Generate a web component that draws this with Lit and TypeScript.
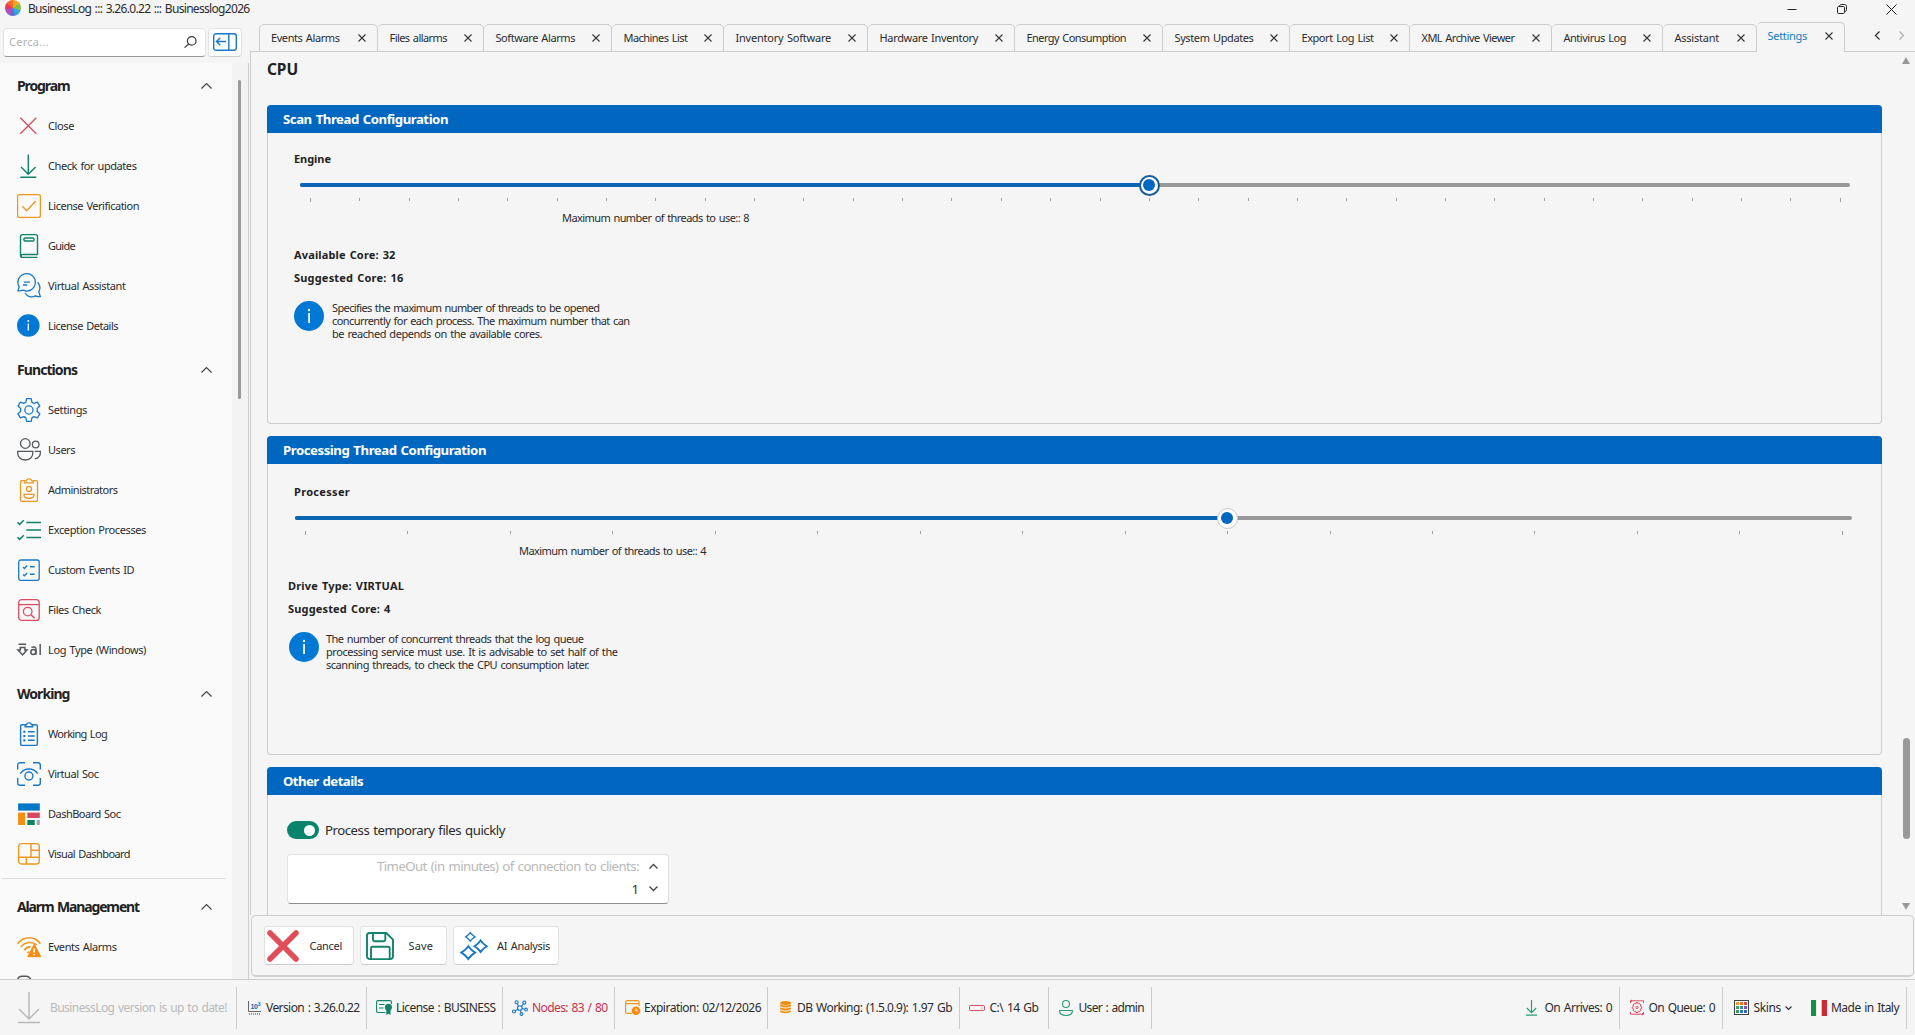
import { LitElement, html, css, svg, nothing } from "lit";
import { customElement, property } from "lit/decorators.js";
import { classMap } from "lit/directives/class-map.js";
import { styleMap } from "lit/directives/style-map.js";

const BLUE = "#1a78c6";
const GREEN = "#128268";
const AMBER = "#ee971f";
const RED = "#d94e62";
const GREY = "#55595c";

const check = (x: number, y: number, s = 1) =>
  svg`<path d="M${x} ${y}l${2 * s} ${2 * s}l${4 * s} ${-4 * s}"/>`;

/* Every glyph lives on a 24 x 24 grid unless its entry in BOX says otherwise. */
const GLYPHS: Record<string, unknown> = {
  close: svg`<g stroke="${RED}" stroke-width="1.3"><path d="M3.3 3.800l16 16M19.3 3.800l-16 16"/></g>`,
  update: svg`<g stroke="${GREEN}" stroke-width="1.4"><path d="M11.3.5v19.7M4 13l7.3 7.3L18.600 13M3.300 23.300h16"/></g>`,
  verify: svg`<g stroke="${AMBER}" stroke-width="1.3"><rect x=".6" y=".6" width="22.800" height="22.800" rx="2"/><path d="M5.300 12.300l4.400 4.400 9-9.700"/></g>`,
  guide: svg`<g stroke="${GREEN}" stroke-width="1.4"><path d="M20.400 23.400H5.500a2 2 0 0 1-2-2V2.600a2 2 0 0 1 2-2h13a2 2 0 0 1 2 2v17.900H5.400a1.450 1.450 0 0 0 0 2.900"/><rect x="7" y="4" width="10" height="3" rx="1"/></g>`,
  chat: svg`<g stroke="${BLUE}" stroke-width="1.300"><path d="M1 16.800l1.200-4A8.700 8.700 0 1 1 6 16.200c-1.500.600-3.200.800-5 .600z"/><path d="M7 8.200h6M6 11h4.300" stroke-width="1.300"/><path d="M20.600 8.300c2.600 3 2.900 6.500 1.200 9.600l1.500 4.600c-1.900.300-3.400 0-4.800-.700-4 2-8.300.900-10.500-2.800"/></g>`,
  info: svg`<circle cx="11.300" cy="11.500" r="11.300" fill="#0078d4" stroke="none"/><path d="M11.300 9.400v7.200" stroke="#fff" stroke-width="1.300"/><circle cx="11.300" cy="6.900" r=".95" fill="#fff"/>`,
  gear: svg`<g stroke="${BLUE}" stroke-width="1.300"><path d="M9.600.700h4.600l.8 3.600q1 .4 2 1l3.400-1.200 2.400 4-2.700 2.500q.3 1.300 0 2.700l2.700 2.500-2.400 4-3.400-1.200q-1 .700-2 1.100l-.8 3.600H9.600l-.8-3.600q-1-.4-2-1.100l-3.400 1.200-2.400-4 2.700-2.500q-.3-1.400 0-2.700L1 8.100l2.400-4 3.400 1.200q1-.6 2-1z" stroke-linejoin="round"/><circle cx="11.900" cy="12" r="4.100"/></g>`,
  users: svg`<g stroke="${GREY}" stroke-width="1.300"><circle cx="8.300" cy="5.500" r="4.800"/><circle cx="18.700" cy="6.500" r="3.300"/><path d="M.600 13.300h15.300c.4 5.600-2.800 8.700-7.600 8.700S.2 18.900.6 13.300zM17.700 13.300h5.700c.4 4.600-2 7.300-5.700 7.500"/></g>`,
  admin: svg`<g stroke="${AMBER}" stroke-width="1.300"><path d="M7.700 2.600H4.800A1.300 1.300 0 0 0 3.500 3.900v18.200a1.300 1.300 0 0 0 1.300 1.300h14.400a1.300 1.300 0 0 0 1.300-1.300V3.900a1.300 1.300 0 0 0-1.300-1.300h-2.900"/><path d="M7.700 4.900V2.800h1.500C9.800.300 14.200.300 14.800 2.800h1.500v2.100z"/><circle cx="12" cy="10.900" r="2.500"/><path d="M7 16.400h10c.2 2.700-1.700 3.900-5 3.900s-5.200-1.200-5-3.900z"/></g>`,
  checklist: svg`<g stroke="${GREEN}" stroke-width="1.500">${check(0.5, 4.300, 1.050)}${check(0.5, 19.300, 1.050)}<path d="M9.300 4.500h14.700M9.300 12h14.700M9.300 19.600h14.700"/></g>`,
  events: svg`<g stroke="${BLUE}" stroke-width="1.300"><rect x="1.700" y="2" width="20.500" height="20.300" rx="2"/><g stroke-width="1.400">${check(6, 9, 0.7)}${check(6, 16.400, 0.7)}<path d="M13 8.700h4.700M13 16.200h4.700"/></g></g>`,
  files: svg`<g stroke="${RED}" stroke-width="1.300"><rect x="1.700" y="1.700" width="20.500" height="20.700" rx="3"/><path d="M1.700 6.600h20.500"/><circle cx="10.700" cy="13.600" r="4.300"/><path d="M14 16.800l3.600 3.500" stroke-width="1.600"/></g>`,
  logtype: svg`<g stroke="${GREY}" stroke-width="1.500"><path d="M1.500 6.300h7.600M3.300 9.400h4.600v2.700h2L5.600 16.900 1 12.100h2.300z"/><circle cx="16.300" cy="13.900" r="2.500" /><path d="M14.400 9.400c2-1 4.600-.5 4.600 1.600v5.800M23.200 5.900v11"/></g>`,
  worklog: svg`<g stroke="${BLUE}" stroke-width="1.400"><rect x="3.600" y="2.700" width="16.800" height="20.700" rx="1.500"/><path d="M8.200 2.700h1.300C10 .2 14 .2 14.500 2.700h1.300v2.100H8.200z" fill="#fafafa"/><path d="M11 9.700h6.700M11 14h6.700M11 18.300h6.700"/></g><g fill="${BLUE}"><rect x="6.300" y="8.700" width="2.100" height="2.100"/><rect x="6.300" y="13" width="2.100" height="2.100"/><rect x="6.300" y="17.300" width="2.100" height="2.100"/></g>`,
  soc: svg`<g stroke="${BLUE}" stroke-width="1.400"><path d="M.7 7.500V3A2.300 2.300 0 0 1 3 .7h5M16 .7h5A2.300 2.300 0 0 1 23.300 3v4.500M23.300 16v5a2.300 2.300 0 0 1-2.300 2.300h-5M8 23.300H3A2.300 2.300 0 0 1 .7 21v-5"/><circle cx="11.900" cy="14" r="4"/><path d="M3.300 11.600C5.300 8.700 8.500 7 12 7s6.700 1.700 8.700 4.600"/></g>`,
  blocks: svg`<g stroke="none"><rect x="1.100" y="1.400" width="21.700" height="7.200" fill="#0078c8"/><rect x="1.100" y="10.600" width="7" height="12.400" fill="#f98d10"/><rect x="10.300" y="10.600" width="12.500" height="5.400" fill="#d94a60"/><rect x="10.300" y="18" width="7.400" height="5" fill="#0b8466"/><rect x="19.700" y="18" width="3.100" height="5" fill="#a5a5a5"/></g>`,
  tiles: svg`<g stroke="${AMBER}" stroke-width="1.400"><rect x="1.600" y="1.600" width="20.700" height="20.400" rx="3"/><path d="M1.600 15.300h20.700M14 1.600v13.700M14 8.300h8.300M9.300 15.300V22"/></g>`,
  alarm: svg`<g stroke="${AMBER}" stroke-width="1.600"><path d="M.7 8.700C6.500.700 18 .700 23.300 8.700M3.900 12C8 6.300 15.800 6.300 19.700 10M7.300 15.200c1.500-2.300 3.600-3.500 6.300-3.300M10.300 18.200c.5-.8 1.100-1.300 2-1.500"/></g><path d="M17.200 9.300L10.800 21.700h13z" fill="#f98d10" stroke="#f98d10"/><path d="M17.200 13.500v4M17.200 19v1.200" stroke="#fff" stroke-width="1.500"/>`,
  partial: svg`<path d="M.7 5.500C.7 2.500 2 1.200 5 1.200h4c2.600 0 4.200 1.300 4.700 3.500M3.500 4.800h7" stroke="${GREY}" stroke-width="1.400"/>`,
  collapse: svg`<g stroke="${BLUE}" stroke-width="1.400"><rect x=".7" y=".7" width="22.600" height="16.600" rx="2.300"/><path d="M15.800.7v16.600M13 8.500H3.500M7.300 4.700L3.400 8.500l3.900 3.800"/></g>`,
  search: svg`<g stroke="#3b3b3b" stroke-width="1.200"><circle cx="7.700" cy="4.900" r="4.300"/><path d="M4.600 8L.5 11.600"/></g>`,
  up: svg`<path d="M.5 5.500l5-5 5 5" stroke="#444" stroke-width="1.200"/>`,
  down: svg`<path d="M.5.500l4 4 4-4" stroke="#444" stroke-width="1.300"/>`,
  upSmall: svg`<path d="M.5 4.500l4-4 4 4" stroke="#444" stroke-width="1.300"/>`,
  caret: svg`<path d="M.5.500l3 3 3-3" stroke="#333" stroke-width="1.200"/>`,
  left: svg`<path d="M4.500.5l-4 4 4 4" stroke="#333" stroke-width="1.300"/>`,
  right: svg`<path d="M.5.500l4 4-4 4" stroke="#b0b0b0" stroke-width="1.200"/>`,
  tabClose: svg`<path d="M.5.500l7 7M7.500.500l-7 7" stroke="#333" stroke-width="1.100"/>`,
  minimize: svg`<path d="M.500 5.500h9" stroke="#222"/>`,
  restore: svg`<g stroke="#222"><rect x=".500" y="2.500" width="7" height="7" rx="1.200"/><path d="M2.500 2.300c0-1.200.700-1.800 1.800-1.800h3c1.500 0 2.200.700 2.200 2.200v3c0 1.100-.600 1.800-1.800 1.800"/></g>`,
  exit: svg`<path d="M.500.500l10 10M10.500.500l-10 10" stroke="#222"/>`,
  cancel: svg`<g stroke="#e04e5a" stroke-width="5.600" stroke-linecap="round"><path d="M3 3l26 26M29 3L3 29"/></g>`,
  save: svg`<g stroke="${GREEN}" stroke-width="1.900"><path d="M3.800 1h16.500L27 7.700v16.600a2.800 2.800 0 0 1-2.800 2.800H3.800A2.800 2.800 0 0 1 1 24.300V3.800A2.800 2.800 0 0 1 3.800 1z"/><path d="M7 1v6.700a1.500 1.500 0 0 0 1.500 1.500h9.300a1.500 1.500 0 0 0 1.500-1.500V1M5 27V16.300a1.500 1.500 0 0 1 1.500-1.500h15.700a1.500 1.500 0 0 1 1.500 1.500V27"/></g>`,
  spark: svg`<g stroke="${BLUE}" stroke-width="1.900"><path d="M8.300 14.200q2.700 3.900 6.700 6.400-4 2.500-6.700 6.400-2.700-3.900-6.900-6.400 4.200-2.500 6.900-6.400zM20.600 8.500q2.400 3.500 6.100 5.700-3.700 2.200-6.100 5.700-2.400-3.500-6.100-5.700 3.700-2.200 6.100-5.700z"/><path stroke-width="1.300" d="M10.300.7q1.800 2.600 4.600 4.200-2.800 1.600-4.600 4.200-1.800-2.600-4.600-4.200Q8.500 3.300 10.300.7z"/></g>`,
  download: svg`<g stroke="#b9b9b9" stroke-width="1.500"><path d="M11 0v26.500M1 17l10 10 10-10M0 30.500h22"/></g>`,
  version: svg`<path d="M.5 0v10.500h12.500" stroke="#666"/><path d="M1 13h12" stroke="#333" stroke-dasharray="1 1"/><text x="2.500" y="7.500" font-size="7" font-weight="700" font-family="Liberation Sans" letter-spacing="-.3" fill="#0a70b8" stroke="none">10</text><text x="9.800" y="4.500" font-size="5" font-weight="700" font-family="Liberation Sans" fill="#0a70b8" stroke="none">3</text>`,
  license: svg`<g stroke="${GREEN}" stroke-width="1.100"><path d="M9.500 12.500H2A1.300 1.300 0 0 1 .6 11.200V2A1.300 1.300 0 0 1 2 .6h12A1.300 1.300 0 0 1 15.400 2v2M3 4.500h5.500M3 8h4.500"/></g><circle cx="12.400" cy="7.300" r="3.500" fill="${GREEN}"/><path d="M10.300 10v5l2.100-1.300 2.100 1.300v-5z" fill="${GREEN}"/>`,
  nodes: svg`<g stroke="${BLUE}" stroke-width="1.100"><circle cx="7.800" cy="8" r="2.300"/><circle cx="4.600" cy="2.300" r="1.500"/><circle cx="12.300" cy="2.600" r="1.500"/><circle cx="14" cy="9.500" r="1.400"/><circle cx="9.500" cy="14" r="1.400"/><circle cx="2" cy="11.500" r="1.500"/><path d="M6.500 6L5.300 3.700M9.500 6.300l1.900-2.500M10 8.500l2.600.7M8.300 10.300l.8 2.400M5.800 9.300l-2.500 1.400"/></g>`,
  expiry: svg`<g stroke="${AMBER}" stroke-width="1.200"><path d="M7 13.400H2.300A1.700 1.700 0 0 1 .6 11.700V2.300A1.700 1.700 0 0 1 2.300.6h10a1.700 1.700 0 0 1 1.700 1.700V6M.6 3.700H14"/></g><circle cx="11" cy="10.700" r="4.300" fill="#f18d0c"/><path d="M11 8.300v2.600h1.800" stroke="#fff" stroke-width=".9"/>`,
  db: svg`<g fill="#f18d0c"><ellipse cx="5.500" cy="2" rx="5.300" ry="1.900"/><path d="M.2 3.200q5.300 2.600 10.600 0v2.100q-5.300 2.500-10.600 0zM.2 6.200q5.300 2.600 10.600 0v2.100q-5.300 2.500-10.600 0zM.2 9.200q5.300 2.600 10.600 0v1.700q-5.300 2.500-10.600 0z"/></g>`,
  drive: svg`<rect x=".5" y=".5" width="15" height="5" rx="1.300" stroke="${RED}"/><circle cx="12.700" cy="3" r=".6" fill="${RED}"/>`,
  user: svg`<g stroke="#2a9d78" stroke-width="1.100"><circle cx="7" cy="4" r="3.500"/><path d="M.6 10.500h12.800c.3 3.300-2.300 5-6.400 5S.3 13.800.6 10.500z"/></g>`,
  arrives: svg`<g stroke="#2a9d78" stroke-width="1.200"><path d="M5.500 0v12.500M.8 8l4.700 4.700L10.200 8M0 15.200h11"/></g>`,
  queue: svg`<g stroke="${RED}" stroke-width="1"><path d="M.5 3V.8h13V3M.5 12v2.200h13V12M2 0L.6.8 2 1.800M12 13.200l1.500 1-1.500.9"/><path d="M6 2.700h2l.4 1.300 1.300-.5 1.300 1.500-.7 1.200 1.500.8v1.200l-1.500.8.7 1.200-1.300 1.500-1.300-.5-.4 1.300H6l-.4-1.300-1.300.5L3 10.200 3.700 9l-1.500-.8V7l1.500-.8L3 5l1.300-1.500 1.300.5z"/><circle cx="7" cy="7.500" r="1.100"/></g>`,
  skins: svg`<rect x=".5" y=".5" width="14" height="14" stroke="#3f4145" fill="#fff"/>${[
    ["#e8962e", "#e27432", "#d24b4b"],
    ["#4ba05b", "#3c87c6", "#8253a5"],
    ["#3f9a6a", "#2b78c2", "#2f6cb5"],
  ].map((row, r) => row.map((c, i) => svg`<rect x="${2 + i * 4}" y="${2 + r * 4}" width="3" height="3" fill="${c}"/>`))}`,
  italy: svg`<rect width="5.300" height="16" fill="#159147"/><rect x="5.300" width="5.400" height="16" fill="#fbfbfb"/><rect x="10.700" width="5.300" height="16" fill="#cb2a37"/>`,
};

const BOX: Record<string, [number, number]> = {
  collapse: [24, 18], search: [13, 12], up: [11, 6], down: [9, 5], upSmall: [9, 5], caret: [7, 4],
  left: [5, 9], right: [5, 9], tabClose: [8, 8], minimize: [10, 10], restore: [10, 10], exit: [11, 11],
  cancel: [32, 32], save: [28, 28], spark: [28, 28], download: [22, 31], version: [13, 14],
  license: [16, 16], nodes: [16, 16], expiry: [16, 16], db: [11, 13], drive: [16, 6], user: [14, 16],
  arrives: [11, 16], queue: [14, 15], skins: [15, 15], italy: [16, 16],
};

const icon = (name: string) => {
  const [w, h] = BOX[name] ?? [24, 24];
  return html`<svg class="icon" width=${w} height=${h} viewBox="0 0 ${w} ${h}" fill="none">${GLYPHS[name]}</svg>`;
};

/** A one-line label whose letters are tracked so that it spans a given width. */
@customElement("fit-text")
export class FitText extends LitElement {
  @property({ type: Number }) w = 0;

  static styles = css`
    :host { display: block; white-space: pre; flex: none; }
    .run { display: inline-block; word-spacing: 1px; }
  `;

  firstUpdated() {
    const run = this.renderRoot.querySelector<HTMLElement>(".run")!;
    const count = (this.textContent ?? "").length;
    if (this.w && count > 1) {
      const natural = run.getBoundingClientRect().width;
      run.style.letterSpacing = `${(this.w - natural) / count}px`;
    }
  }

  render() {
    return html`<span class="run"><slot></slot></span>`;
  }
}

const text = (label: string, w: number) => html`<fit-text w=${w}>${label}</fit-text>`;

type Entry = [glyph: string, label: string, width: number];

const SECTIONS: { title: string; width: number; ruled?: boolean; items: Entry[] }[] = [
  {
    title: "Program", width: 52.500,
    items: [
      ["close", "Close", 26], ["update", "Check for updates", 88.500], ["verify", "License Verification", 91],
      ["guide", "Guide", 27], ["chat", "Virtual Assistant", 77.500], ["info", "License Details", 70],
    ],
  },
  {
    title: "Functions", width: 60,
    items: [
      ["gear", "Settings", 39], ["users", "Users", 27], ["admin", "Administrators", 69.500],
      ["checklist", "Exception Processes", 98], ["events", "Custom Events ID", 86],
      ["files", "Files Check", 53], ["logtype", "Log Type (Windows)", 98],
    ],
  },
  {
    title: "Working", width: 52.500,
    items: [
      ["worklog", "Working Log", 59], ["soc", "Virtual Soc", 50.500],
      ["blocks", "DashBoard Soc", 72.500], ["tiles", "Visual Dashboard", 82],
    ],
  },
  {
    title: "Alarm Management", width: 122, ruled: true,
    items: [["alarm", "Events Alarms", 68.500], ["partial", "", 0]],
  },
];

const TABS: [label: string, textWidth: number, tabWidth: number][] = [
  ["Events Alarms", 68.500, 118.500], ["Files allarms", 57.500, 106], ["Software Alarms", 79.500, 128],
  ["Machines List", 64, 112], ["Inventory Software", 95.500, 144], ["Hardware Inventory", 98.500, 147],
  ["Energy Consumption", 99.500, 148], ["System Updates", 79, 127], ["Export Log List", 72, 120],
  ["XML Archive Viewer", 93, 142], ["Antivirus Log", 62.500, 111], ["Assistant", 44.500, 94],
  ["Settings", 39.500, 88],
];

interface StatusCell { glyph: string; label: string; text: number; cell: number; pad: number; slot: number; tone?: string; open?: boolean }

const STATUS_LEFT: StatusCell[] = [
  { glyph: "download", label: "BusinessLog version is up to date!", text: 177, cell: 237, pad: 18, slot: 32, tone: "muted" },
  { glyph: "version", label: "Version : 3.26.0.22", text: 93.500, cell: 130, pad: 11, slot: 18 },
  { glyph: "license", label: "License : BUSINESS", text: 99.500, cell: 136, pad: 9, slot: 20 },
  { glyph: "nodes", label: "Nodes: 83 / 80", text: 75.500, cell: 112, pad: 9, slot: 20, tone: "alert" },
  { glyph: "expiry", label: "Expiration: 02/12/2026", text: 117, cell: 153, pad: 10, slot: 19 },
  { glyph: "db", label: "DB Working: (1.5.0.9): 1.97 Gb", text: 155, cell: 192, pad: 12, slot: 17 },
  { glyph: "drive", label: "C:\\ 14 Gb", text: 49, cell: 89, pad: 9, slot: 20.500 },
  { glyph: "user", label: "User : admin", text: 65.500, cell: 103, pad: 10, slot: 19.500 },
];

const STATUS_RIGHT: StatusCell[] = [
  { glyph: "arrives", label: "On Arrives: 0", text: 67.500, cell: 93.500, pad: 0, slot: 18.500 },
  { glyph: "queue", label: "On Queue: 0", text: 66.500, cell: 103.500, pad: 10, slot: 19 },
  { glyph: "skins", label: "Skins", text: 27.500, cell: 79, pad: 11, slot: 19.500, open: true },
  { glyph: "italy", label: "Made in Italy", text: 68, cell: 105, pad: 9, slot: 20 },
];

@customElement("thread-slider")
export class ThreadSlider extends LitElement {
  @property({ type: Number }) ticks = 2;
  @property({ type: Number }) at = 0;
  @property({ type: Boolean }) focused = false;

  static styles = css`
    :host { display: block; }
    .track { position: relative; height: 4px; border-radius: 2px; background: #999; }
    .fill { height: 4px; border-radius: 2px; background: #0a64b4; }
    .thumb {
      position: absolute; top: 50%; width: 21px; height: 21px; margin: -10.5px 0 0 -10.5px; box-sizing: border-box;
      border: 1px solid #c8c8c8; border-radius: 50%; background: #fff;
      display: flex; align-items: center; justify-content: center;
    }
    .thumb.focused { border: 2px solid #15599f; }
    .dot { width: 12px; height: 12px; border-radius: 50%; background: #0067c0; }
    .ticks { display: flex; justify-content: space-between; margin: 11px 9px 0 10px; height: 5px; }
    .tick { width: 1px; height: 3px; background: #a0a0a0; }
    .tick:first-child, .tick:last-child { height: 4px; }
  `;

  render() {
    return html`
      <div class="track">
        <div class="fill" style=${styleMap({ width: `${this.at}%` })}></div>
        <div class=${classMap({ thumb: true, focused: this.focused })} style=${styleMap({ left: `${this.at}%` })}>
          <div class="dot"></div>
        </div>
      </div>
      <div class="ticks">${Array.from({ length: this.ticks }, () => html`<div class="tick"></div>`)}</div>
    `;
  }
}

@customElement("app-root")
export class AppRoot extends LitElement {
  static styles = css`
    :host {
      display: grid; grid-template-rows: 22px minmax(0, 1fr) 56px; width: 100vw; height: 100vh; overflow: hidden;
      background: #f5f5f5; color: #2b2b2b;
      font: 11px/16px "Noto Sans", "Open Sans", sans-serif;
    }
    * { box-sizing: border-box; }
    .icon { display: block; flex: none; overflow: visible; }

    .titlebar { display: flex; align-items: center; height: 18px; padding: 0 18px 0 5px; gap: 7px; font-size: 12px; }
    .logo {
      width: 16px; height: 16px; border-radius: 50%; margin-top: -3px;
      background: conic-gradient(#f3a61b 0 15%, #7fc241 15% 30%, #35a7d8 30% 45%, #5a6fd6 45% 58%, #b24bc0 58% 72%, #ea3a55 72% 85%, #f06c2a 85%);
    }
    .window-buttons { display: flex; align-items: center; gap: 39.5px; margin-left: auto; }

    .body { display: grid; grid-template-columns: 250px minmax(0, 1fr); min-height: 0; }

    .side { display: flex; flex-direction: column; min-height: 0; padding-top: 6px; }
    .search-row { display: flex; gap: 2px; padding-left: 3px; height: 29px; }
    .search {
      display: flex; align-items: center; justify-content: space-between; width: 203px; padding: 0 8px 1px 5px;
      border: 1px solid #e4e4e4; border-bottom-color: #999; border-radius: 4px; background: #fff; color: #b3b3b3;
    }
    .pin {
      display: flex; align-items: center; justify-content: center; width: 34px; padding-bottom: 1px;
      border: 1px solid #e2e2e2; border-bottom-color: #ccc; border-radius: 4px; background: #fff;
    }
    .side-main { display: grid; grid-template-columns: 232px 16px 2px; flex: 1; min-height: 0; margin-top: 6px; }
    .nav { background: #fafafa; padding-top: 3px; overflow: hidden; }
    .gutter { display: flex; justify-content: flex-end; padding: 17px 7px 0 0; background: #f3f3f3; }
    .gutter-thumb { width: 3px; height: 319px; border-radius: 2px; background: #999; }
    .edge { border-left: 1px solid #ccc; }
    .section { padding-bottom: 4px; }
    .section.ruled { margin: 0 6px 0 2px; padding-top: 8px; border-top: 1px solid #dcdcdc; }
    .heading {
      display: flex; align-items: center; justify-content: space-between; height: 40px; padding: 0 20px 0 17px;
      font-size: 14px; font-weight: 700; color: #222;
    }
    .ruled .heading { padding: 0 14px 0 15px; }
    .ruled .nav-item { padding-left: 15px; }
    .nav-item { display: flex; align-items: center; gap: 7px; height: 40px; padding-left: 17px; }

    .main { display: flex; flex-direction: column; min-width: 0; min-height: 0; }
    .tabs { display: flex; align-items: flex-end; height: 30px; flex: none; }
    .lead { width: 9px; height: 1px; background: #ccc; }
    .tab {
      display: flex; align-items: center; justify-content: space-between; height: 28px; padding: 0 11px; flex: none;
      border: 1px solid #ccc; border-radius: 5px 5px 0 0;
    }
    .tab + .tab { border-left-width: 0; padding-left: 12px; }
    .tab.active { height: 30px; padding: 0 11px 3px; border-bottom: none; color: #1379c4; }
    .tab-tail { display: flex; align-items: center; gap: 19px; flex: 1; height: 30px; padding: 0 0 3px 30px; border-bottom: 1px solid #ccc; }

    .content { display: grid; grid-template-columns: minmax(0, 1fr) 33px; flex: 1; min-height: 0; border-left: 1px solid #ccc; overflow: hidden; }
    .page { padding: 8px 0 0 16px; min-height: 0; overflow: hidden; }
    .page-title { height: 45px; font-size: 15.5px; line-height: 18px; font-weight: 700; color: #222; }
    .panel { height: 319px; margin-bottom: 12px; border: 1px solid #ccc; border-top: none; border-radius: 4px; }
    .panel-head {
      height: 28px; margin: 0 -1px; padding-left: 16px; border-radius: 4px 4px 0 0; background: #0067c0; color: #fff;
      font-size: 13.2px; line-height: 28px; font-weight: 700;
    }
    .strong { font-weight: 700; color: #222; }
    .scan { padding: 18px 31px 0 26px; }
    .scan thread-slider { margin: 16px 0 0 6px; }
    .scan .value { padding: 7px 0 21px 268px; }
    .proc { padding: 20px 29px 0 20px; }
    .proc .label { padding-left: 6px; }
    .proc thread-slider { margin: 16px 0 0 7px; }
    .proc .value { padding: 7px 0 19px 231px; }
    .facts { display: grid; gap: 7px; }
    .hint { display: flex; gap: 8px; margin-top: 15px; line-height: 13px; }
    .proc .hint { padding-left: 1px; gap: 7px; }
    .badge { display: block; flex: none; }
    .other { padding: 26px 0 0 19px; }
    .toggle-row { display: flex; align-items: center; gap: 6px; height: 18px; font-size: 13.2px; }
    .toggle { display: flex; align-items: center; justify-content: flex-end; width: 32px; height: 18px; padding-right: 4px; border-radius: 9px; background: #07846b; }
    .knob { width: 11px; height: 11px; border-radius: 50%; background: #fff; }
    .spin {
      display: grid; grid-template-columns: 1fr 9px; column-gap: 10px; grid-template-rows: 22px 23px; align-items: center; justify-items: end;
      width: 382px; height: 50px; margin-top: 15px; padding: 0 10px 0 0;
      border: 1px solid #e2e2e2; border-bottom-color: #8f8f8f; border-radius: 4px; background: #fff; font-size: 13.2px;
    }
    .placeholder { color: #b8b8b8; }
    .spin-value { color: #333; }

    .scroll { display: flex; flex-direction: column; align-items: center; padding: 5px 0 5px 15px; }
    .scroll-arrow { flex: none; }
    .scroll-thumb { width: 7px; height: 101px; margin: auto 0 64px; border-radius: 4px; background: #999; }

    .actions {
      display: flex; align-items: center; gap: 6px; height: 62px; flex: none; margin: 0 1px 2px 1px; padding: 0 12px;
      border: 1px solid #ccc; border-bottom: 2px solid #d0d0d0; border-radius: 5px;
    }
    .action {
      display: flex; align-items: center; justify-content: space-between; height: 39px;
      border: 1px solid #e2e2e2; border-bottom-color: #ccc; border-radius: 4px; background: #fff;
    }
    .action.cancel { width: 90px; padding: 0 11px 0 2px; }
    .action.save { width: 87px; padding: 0 13px 0 5px; }
    .action.ai { width: 106px; padding: 0 8px 0 6px; }

    .status { display: flex; align-items: center; border-top: 1px solid #ccc; padding-right: 8px; font-size: 12px; }
    .cell { display: flex; align-items: center; height: 42px; flex: none; border-right: 1px solid #ccc; }
    .cell.open { border-right: none; }
    .slot { display: flex; align-items: center; flex: none; }
    .muted { color: #b9b9b9; }
    .alert { color: #c9304c; }
    .chevron { margin-left: 4px; }
    .spring { flex: 1; }
  `;

  private section(s: (typeof SECTIONS)[number]) {
    return html`
      <div class=${classMap({ section: true, ruled: !!s.ruled })}>
        <div class="heading">${text(s.title, s.width)}${icon("up")}</div>
        ${s.items.map(([g, label, w]) => html`<div class="nav-item">${icon(g)}${label ? text(label, w) : nothing}</div>`)}
      </div>
    `;
  }

  private cell(c: StatusCell) {
    return html`
      <div class=${classMap({ cell: true, open: !!c.open, [c.tone ?? "plain"]: true })}
        style=${styleMap({ width: `${c.cell}px`, paddingLeft: `${c.pad}px` })}>
        <div class="slot" style=${styleMap({ width: `${c.slot}px` })}>${icon(c.glyph)}</div>
        ${text(c.label, c.text)}
        ${c.open ? html`<div class="chevron">${icon("caret")}</div>` : nothing}
      </div>
    `;
  }

  private hint(lines: [string, number][]) {
    return html`
      <div class="hint">
        <svg class="badge" width="30" height="30" viewBox="0 0 30 30">
          <circle cx="15" cy="15" r="15" fill="#0078d4" />
          <rect x="14.200" y="12" width="1.700" height="10" fill="#fff" />
          <circle cx="15" cy="9" r="1.200" fill="#fff" />
        </svg>
        <div>${lines.map(([l, w]) => text(l, w))}</div>
      </div>
    `;
  }

  render() {
    return html`
      <div class="titlebar">
        <div class="logo"></div>
        ${text("BusinessLog ::: 3.26.0.22 ::: Businesslog2026", 221.5)}
        <div class="window-buttons">${icon("minimize")}${icon("restore")}${icon("exit")}</div>
      </div>

      <div class="body">
        <div class="side">
          <div class="search-row">
            <div class="search">${text("Cerca...", 40)}${icon("search")}</div>
            <div class="pin">${icon("collapse")}</div>
          </div>
          <div class="side-main">
            <div class="nav">${SECTIONS.map((s) => this.section(s))}</div>
            <div class="gutter"><div class="gutter-thumb"></div></div>
            <div class="edge"></div>
          </div>
        </div>

        <div class="main">
          <div class="tabs">
            <div class="lead"></div>
            ${TABS.map(([label, w, tw], i) => html`
              <div class=${classMap({ tab: true, active: i === TABS.length - 1 })} style=${styleMap({ width: `${tw}px` })}>
                ${text(label, w)}${icon("tabClose")}
              </div>`)}
            <div class="tab-tail">${icon("left")}${icon("right")}</div>
          </div>

          <div class="content">
            <div class="page">
              <div class="page-title">${text("CPU", 31)}</div>

              <div class="panel">
                <div class="panel-head">${text("Scan Thread Configuration", 165)}</div>
                <div class="scan">
                  <div class="strong">${text("Engine", 37)}</div>
                  <thread-slider ticks="32" at="54.800" focused></thread-slider>
                  <div class="value">${text("Maximum number of threads to use:: 8", 187)}</div>
                  <div class="facts strong">
                    ${text("Available Core: 32", 101.5)}${text("Suggested Core: 16", 109.5)}
                  </div>
                  ${this.hint([
                    ["Specifies the maximum number of threads to be opened", 267.5],
                    ["concurrently for each process. The maximum number that can", 297.5],
                    ["be reached depends on the available cores.", 210],
                  ])}
                </div>
              </div>

              <div class="panel">
                <div class="panel-head">${text("Processing Thread Configuration", 203)}</div>
                <div class="proc">
                  <div class="strong label">${text("Processer", 56)}</div>
                  <thread-slider ticks="16" at="59.860"></thread-slider>
                  <div class="value">${text("Maximum number of threads to use:: 4", 187)}</div>
                  <div class="facts strong">
                    ${text("Drive Type: VIRTUAL", 116)}${text("Suggested Core: 4", 102.5)}
                  </div>
                  ${this.hint([
                    ["The number of concurrent threads that the log queue", 257.5],
                    ["processing service must use. It is advisable to set half of the", 291.5],
                    ["scanning threads, to check the CPU consumption later.", 263],
                  ])}
                </div>
              </div>

              <div class="panel">
                <div class="panel-head">${text("Other details", 80)}</div>
                <div class="other">
                  <div class="toggle-row">
                    <div class="toggle"><div class="knob"></div></div>
                    ${text("Process temporary files quickly", 180)}
                  </div>
                  <div class="spin">
                    <div class="placeholder">${text("TimeOut (in minutes) of connection to clients:", 262)}</div>
                    ${icon("upSmall")}
                    <div class="spin-value">1</div>
                    ${icon("down")}
                  </div>
                </div>
              </div>
            </div>
            <div class="scroll">
              <svg class="scroll-arrow" width="8" height="7" viewBox="0 0 8 7"><path d="M4 0l4 7H0z" fill="#999" /></svg>
              <div class="scroll-thumb"></div>
              <svg class="scroll-arrow" width="8" height="7" viewBox="0 0 8 7"><path d="M4 7l4-7H0z" fill="#999" /></svg>
            </div>
          </div>

          <div class="actions">
            <div class="action cancel">${icon("cancel")}${text("Cancel", 32.5)}</div>
            <div class="action save">${icon("save")}${text("Save", 24.5)}</div>
            <div class="action ai">${icon("spark")}${text("AI Analysis", 53)}</div>
          </div>
        </div>
      </div>

      <div class="status">
        ${STATUS_LEFT.map((c) => this.cell(c))}
        <div class="spring"></div>
        ${STATUS_RIGHT.map((c) => this.cell(c))}
      </div>
    `;
  }
}
